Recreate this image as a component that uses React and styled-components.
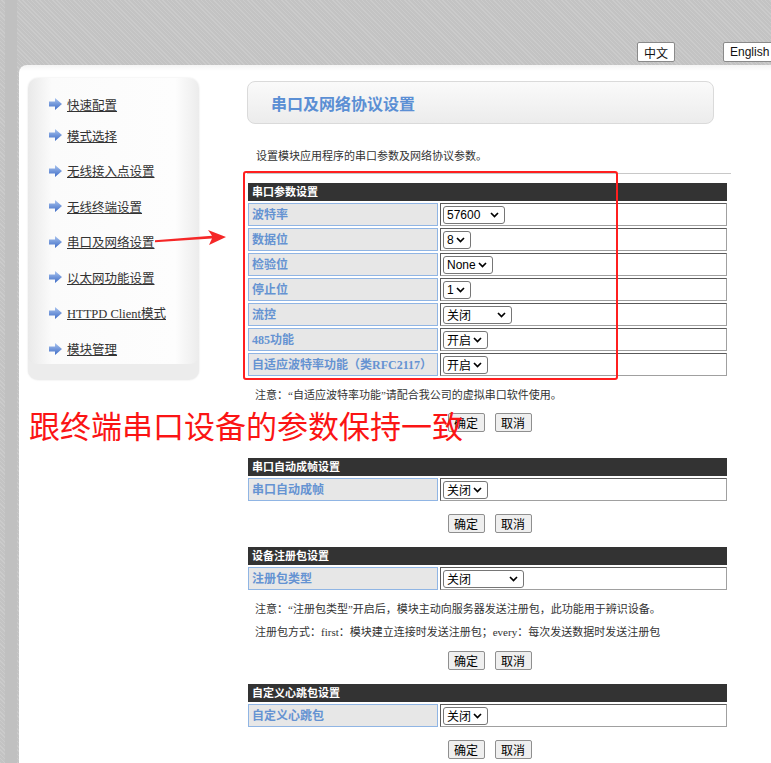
import styled, { createGlobalStyle } from "styled-components";

const GlobalStyle = createGlobalStyle`
  html, body {
    margin: 0;
    padding: 0;
    overflow: hidden;
  }
  body {
    font-family: "Liberation Serif", "Noto Sans CJK SC", serif;
    color: #333;
  }
`;

const Page = styled.div`
  position: relative;
  display: flex;
  min-height: 763px;
  background: repeating-linear-gradient(
    45deg,
    #cbcbcb 0 1px,
    #c3c3c3 1px 3px
  );
`;

const Rail = styled.div`
  flex-shrink: 0;
  width: 12px;
  margin-left: 5px;
  background: #c0c0c0;
`;

const Main = styled.div`
  flex: 1;
  min-width: 0;
  margin-left: 2px;
  display: flex;
  flex-direction: column;
`;

const TopBar = styled.div`
  height: 65px;
  box-sizing: border-box;
  display: flex;
  align-items: flex-end;
  gap: 48px;
  padding: 0 0 3px 618px;
`;

const LangButton = styled.button`
  flex-shrink: 0;
  height: 20px;
  min-width: 37px;
  padding: 0 6px;
  background: #fff;
  border: 1px solid #8a8a8a;
  border-radius: 2px;
  font-family: "Liberation Sans", "Noto Sans CJK SC", sans-serif;
  font-size: 12px;
  color: #111;
`;

const Panel = styled.div`
  flex: 1;
  display: flex;
  align-items: flex-start;
  padding: 13px 0 0 9px;
  background: linear-gradient(#f4f4f4, #fff 6px);
  border-top-left-radius: 8px;
`;

const Sidebar = styled.nav`
  flex-shrink: 0;
  width: 171px;
  height: 302px;
  box-sizing: border-box;
  padding: 17px 0 0 21px;
  border-radius: 10px;
  background: linear-gradient(to right, #e9e9e9, #fbfbfb 14%, #fdfdfd 86%, #ececec);
  box-shadow: inset 0 -18px 0 -2px #ececec, 0 0 2px rgba(0, 0, 0, 0.12);
  display: flex;
  flex-direction: column;
  gap: 17.6px;
`;

const SideItem = styled.a`
  display: flex;
  align-items: center;
  gap: 5px;
  height: 18px;
  font-size: 12.5px;
  color: #333;
  text-decoration: underline;
  cursor: pointer;

  &:first-child {
    margin-bottom: -4.6px;
  }
`;

const ArrowIcon = () => (
  <svg width="13" height="12" viewBox="0 0 13 12">
    <defs>
      <linearGradient id="sideArrow" x1="0" y1="0" x2="0" y2="1">
        <stop offset="0" stopColor="#a9c4ef" />
        <stop offset="1" stopColor="#3e6cc6" />
      </linearGradient>
    </defs>
    <path d="M0 3.5H6V0L13 6L6 12V8.5H0Z" fill="url(#sideArrow)" />
  </svg>
);

const Content = styled.div`
  width: 484px;
  flex-shrink: 0;
  margin: 3px 0 0 48px;
`;

const TitleBox = styled.div`
  width: 467px;
  height: 43px;
  box-sizing: border-box;
  display: flex;
  align-items: center;
  padding-left: 23px;
  border: 1px solid #dadada;
  border-radius: 8px;
  background: linear-gradient(#fafafa, #ececec);
  font-family: "Noto Sans CJK SC", sans-serif;
  font-size: 16px;
  font-weight: 700;
  color: #5b8fd4;
`;

const Desc = styled.p`
  margin: 23px 0 0;
  padding-left: 9px;
  font-size: 11px;
  line-height: 18px;
`;

const Rule = styled.hr`
  margin: 8px 0 0;
  border: 0;
  border-top: 1px solid #c8c8c8;
`;

const Section = styled.section`
  margin-top: ${(p) => p.$top}px;
`;

const Grid = styled.div`
  display: grid;
  grid-template-columns: 190px 287px;
  gap: 2px;
  margin-left: 1px;
`;

const Head = styled.div`
  grid-column: 1 / -1;
  height: 18px;
  padding-left: 4px;
  background: #333;
  color: #fff;
  font-size: 11px;
  font-weight: 700;
  line-height: 18px;
`;

const Label = styled.div`
  height: 23px;
  box-sizing: border-box;
  padding-left: 3px;
  border: 1px solid #90b5e4;
  background: #e7e7e7;
  color: #6593d2;
  font-size: 12px;
  font-weight: 700;
  line-height: 22px;
  white-space: nowrap;
`;

const Value = styled.div`
  height: 23px;
  box-sizing: border-box;
  display: flex;
  align-items: center;
  padding-left: 2px;
  border: 1px solid #a0a0a0;
  border-top-color: #5a5a5a;
  border-left-color: #5a5a5a;
  background: #fff;
`;

const SelectBox = styled.div`
  width: ${(p) => p.$w}px;
  height: 18px;
  box-sizing: border-box;
  display: flex;
  align-items: center;
  justify-content: space-between;
  padding: 0 5px 0 3px;
  border: 1px solid #767676;
  border-radius: 3px;
  background: #fff;
  font-family: "Liberation Sans", "Noto Sans CJK SC", sans-serif;
  font-size: 12px;
  color: #000;
  white-space: nowrap;
`;

const Chevron = () => (
  <svg width="9" height="6" viewBox="0 0 9 6">
    <path d="M1 1L4.5 4.5L8 1" fill="none" stroke="#000" strokeWidth="1.7" />
  </svg>
);

const Note = styled.p`
  margin: 0;
  padding-left: 8px;
  font-size: 11px;
  line-height: 23px;
  white-space: nowrap;
`;

const Notes = styled.div`
  margin-top: 8px;
`;

const ButtonRow = styled.div`
  display: flex;
  justify-content: center;
  gap: 10px;
  margin-top: ${(p) => p.$top}px;
  padding-left: 1px;
`;

const Button = styled.button`
  width: 37px;
  height: 19px;
  padding: 0;
  background: #efefef;
  border: 1px solid #8f8f8f;
  border-radius: 2px;
  font-family: "Liberation Sans", "Noto Sans CJK SC", sans-serif;
  font-size: 12px;
  color: #000;
`;

const Callout = styled.div`
  position: absolute;
  left: 29px;
  top: 409px;
  font-family: "Noto Sans CJK SC", sans-serif;
  font-size: 31px;
  line-height: 31px;
  color: #fb1414;
  white-space: nowrap;
  pointer-events: none;
`;

const Highlight = styled.div`
  position: absolute;
  left: 243px;
  top: 171px;
  width: 375px;
  height: 209px;
  box-sizing: border-box;
  border: 2px solid #ff1f1f;
  border-radius: 3px;
  pointer-events: none;
`;

const PointerArrow = styled.svg`
  position: absolute;
  left: 150px;
  top: 226px;
  pointer-events: none;
`;

const serialRows = [
  { label: "波特率", w: 62, value: "57600" },
  { label: "数据位", w: 28, value: "8" },
  { label: "检验位", w: 50, value: "None" },
  { label: "停止位", w: 28, value: "1" },
  { label: "流控", w: 69, value: "关闭" },
  { label: "485功能", w: 45, value: "开启" },
  { label: "自适应波特率功能（类RFC2117）", w: 45, value: "开启" },
];

function Row({ label, w, value }) {
  return (
    <>
      <Label>{label}</Label>
      <Value>
        <SelectBox $w={w}>
          {value}
          <Chevron />
        </SelectBox>
      </Value>
    </>
  );
}

function Buttons({ top }) {
  return (
    <ButtonRow $top={top}>
      <Button>确定</Button>
      <Button>取消</Button>
    </ButtonRow>
  );
}

const menu = [
  "快速配置",
  "模式选择",
  "无线接入点设置",
  "无线终端设置",
  "串口及网络设置",
  "以太网功能设置",
  "HTTPD Client模式",
  "模块管理",
];

export default function App() {
  return (
    <Page>
      <GlobalStyle />
      <Rail />
      <Main>
        <TopBar>
          <LangButton>中文</LangButton>
          <LangButton>English</LangButton>
        </TopBar>
        <Panel>
          <Sidebar>
            {menu.map((m) => (
              <SideItem key={m}>
                <ArrowIcon />
                {m}
              </SideItem>
            ))}
          </Sidebar>
          <Content>
            <TitleBox>串口及网络协议设置</TitleBox>
            <Desc>设置模块应用程序的串口参数及网络协议参数。</Desc>
            <Rule />

            <Section $top={9}>
              <Grid>
                <Head>串口参数设置</Head>
                {serialRows.map((r) => (
                  <Row key={r.label} {...r} />
                ))}
              </Grid>
              <Notes>
                <Note>注意：“自适应波特率功能”请配合我公司的虚拟串口软件使用。</Note>
              </Notes>
              <Buttons top={6} />
            </Section>

            <Section $top={26}>
              <Grid>
                <Head>串口自动成帧设置</Head>
                <Row label="串口自动成帧" w={45} value="关闭" />
              </Grid>
              <Buttons top={13} />
            </Section>

            <Section $top={14}>
              <Grid>
                <Head>设备注册包设置</Head>
                <Row label="注册包类型" w={81} value="关闭" />
              </Grid>
              <Notes>
                <Note>注意：“注册包类型”开启后，模块主动向服务器发送注册包，此功能用于辨识设备。</Note>
                <Note>注册包方式：first：模块建立连接时发送注册包；every：每次发送数据时发送注册包</Note>
              </Notes>
              <Buttons top={7} />
            </Section>

            <Section $top={14}>
              <Grid>
                <Head>自定义心跳包设置</Head>
                <Row label="自定义心跳包" w={45} value="关闭" />
              </Grid>
              <Buttons top={13} />
            </Section>
          </Content>
        </Panel>
      </Main>

      <Highlight />
      <PointerArrow width="80" height="24" viewBox="0 0 80 24">
        <polygon points="5,14.2 62,9.8 58,4 76,11 59,19 62,12.6 5,16.2" fill="#f52727" />
      </PointerArrow>
      <Callout>跟终端串口设备的参数保持一致</Callout>
    </Page>
  );
}
